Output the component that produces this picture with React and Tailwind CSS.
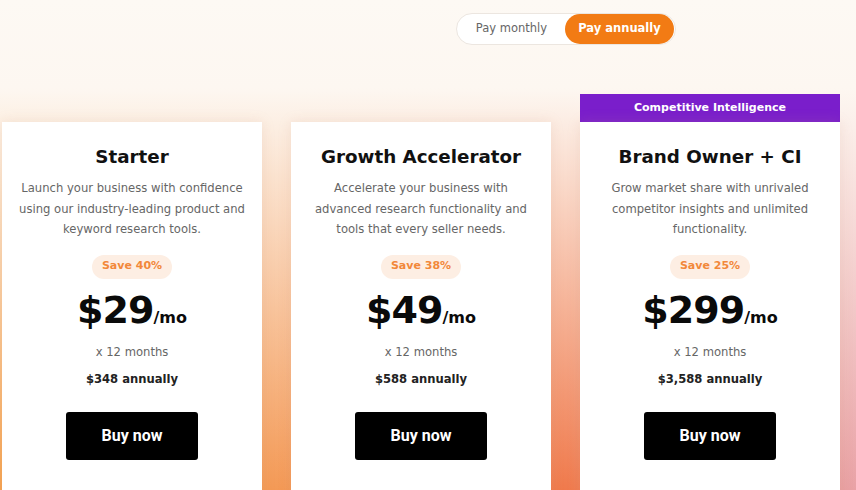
import React from "react";

const plans = [
  {
    name: "Starter",
    desc: ["Launch your business with confidence", "using our industry-leading product and", "keyword research tools."],
    save: "Save 40%",
    price: "$29",
    annual: "$348 annually",
  },
  {
    name: "Growth Accelerator",
    desc: ["Accelerate your business with", "advanced research functionality and", "tools that every seller needs."],
    save: "Save 38%",
    price: "$49",
    annual: "$588 annually",
  },
  {
    name: "Brand Owner + CI",
    desc: ["Grow market share with unrivaled", "competitor insights and unlimited", "functionality."],
    save: "Save 25%",
    price: "$299",
    annual: "$3,588 annually",
    tag: "Competitive Intelligence",
  },
];

function PlanCard({ plan }) {
  return (
    <div className="w-[260px] flex flex-col">
      {plan.tag ? (
        <div className="h-[28px] bg-[#7a1ecb] text-white text-[11px] font-bold flex items-center justify-center">
          {plan.tag}
        </div>
      ) : (
        <div className="h-[28px]" />
      )}
      <div className="bg-white h-[420px] shadow-[0_0_12px_rgba(200,150,120,0.18)] flex flex-col items-center pt-[22px] text-center">
        <h2 className="text-[18.3px] leading-[26px] font-bold text-[#111]">{plan.name}</h2>
        <div className="mt-[8px] text-[11.6px] leading-[20.5px] text-[#666]">
          {plan.desc.map((line, i) => (
            <div key={i}>{line}</div>
          ))}
        </div>
        <div className="mt-[15px] h-[24px] px-[10px] rounded-full bg-[#fdeee3] text-[#f2883a] text-[11px] font-bold flex items-center">
          {plan.save}
        </div>
        <div className="mt-[7px] flex items-baseline text-[#0a0a0a]">
          <span className="text-[38px] leading-[48px] font-extrabold tracking-[-1px]">{plan.price}</span>
          <span className="text-[16px] font-bold">/mo</span>
        </div>
        <div className="mt-[10px] text-[11.6px] text-[#666]">x 12 months</div>
        <div className="mt-[10px] text-[11.6px] font-bold text-[#222]">{plan.annual}</div>
        <button className="mt-[24px] w-[132px] h-[48px] bg-black rounded-[3px] text-white text-[16px] font-bold font-['Roboto',sans-serif]">
          Buy now
        </button>
      </div>
    </div>
  );
}

export default function App() {
  return (
    <div className="w-[856px] h-[490px] overflow-hidden font-['DejaVu_Sans',sans-serif] bg-[linear-gradient(180deg,#fdf9f4_0%,#fdf7f1_18%,rgba(253,246,240,0)_100%),linear-gradient(90deg,#f6a24e_0%,#f49a56_32%,#f07a4c_66%,#e9a2a6_100%)]">
      <div className="pt-[13px] pl-[456px]">
        <div className="w-[220px] h-[32px] rounded-full bg-white border border-[#ece6e0] flex items-center p-[1px]">
          <div className="flex-1 text-center text-[11.5px] text-[#666]">Pay monthly</div>
          <div className="w-[109px] h-[30px] rounded-full bg-[#f27b14] text-white text-[11.5px] font-bold flex items-center justify-center">
            Pay annually
          </div>
        </div>
      </div>
      <div className="mt-[49px] pl-[2px] flex gap-[29px]">
        {plans.map((p) => (
          <PlanCard key={p.name} plan={p} />
        ))}
      </div>
    </div>
  );
}
